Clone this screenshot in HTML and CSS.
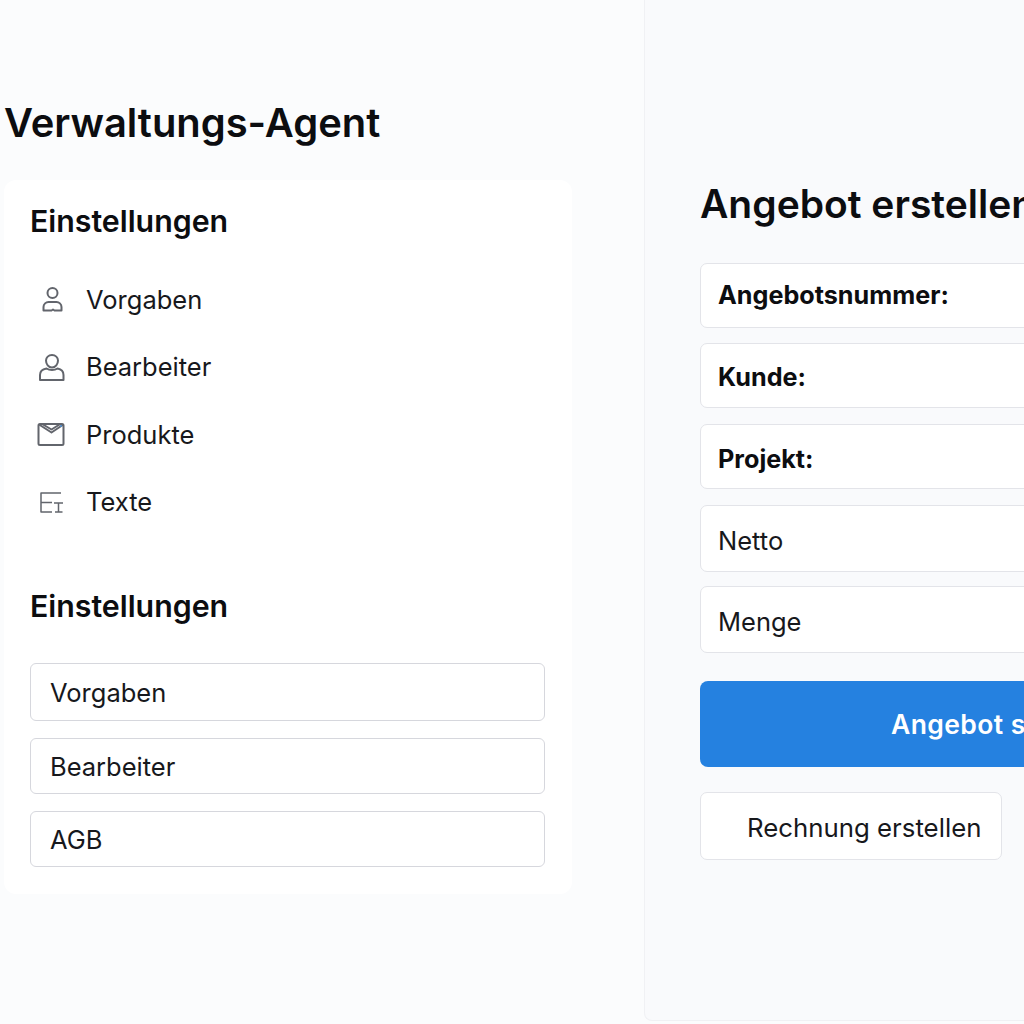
FILE: index.html
```html
<!DOCTYPE html>
<html lang="de">
<head>
<meta charset="utf-8">
<title>Verwaltungs-Agent</title>
<link rel="stylesheet" href="styles.css">
</head>
<body>
<div class="app">
  <main class="left">
    <h1 class="title">Verwaltungs-Agent</h1>
    <section class="card">
      <h2 class="heading">Einstellungen</h2>
      <ul class="menu">
        <li class="menu-item">
          <span class="icon"><svg width="28" height="28" viewBox="0 0 28 28" fill="none"><circle cx="15.500" cy="7" r="5" class="ico"/><path d="M6.500 24.500v-3.500c0-3 2.500-5 5-5h8c2.500 0 5 2 5 5v3.500h-7l-1.500-1-1.500 1z" class="ico"/></svg></span>
          <span>Vorgaben</span>
        </li>
        <li class="menu-item">
          <span class="icon"><svg width="28" height="28" viewBox="0 0 28 28" fill="none"><path d="M15 2c3.500 0 6 2.500 6 5.500 0 3.500-2.500 7-6 7s-6-3.500-6-7C9 4.500 11.500 2 15 2z" class="ico"/><path d="M3 27v-5c0-4 3.500-6 6.500-6.500 1.500 1 3.500 1.500 5.500 1.500s4-.5 5.500-1.500c3 .5 6 2.500 6 6.500v5z" class="ico"/></svg></span>
          <span>Bearbeiter</span>
        </li>
        <li class="menu-item">
          <span class="icon"><svg width="28" height="28" viewBox="0 0 28 28" fill="none"><rect x="1.500" y="4" width="25" height="21" rx="1.500" class="ico"/><path d="M2 4.500l12.500 8 12-8M6 4.500l8.500 5 8-5" class="ico"/><circle cx="24" cy="6" r="1" class="dot"/></svg></span>
          <span>Produkte</span>
        </li>
        <li class="menu-item">
          <span class="icon"><svg width="28" height="28" viewBox="0 0 28 28" fill="none"><path d="M24 5H4v19h11M4 14.500h11M17 15h9M21.500 15v9M18 24h7.500" class="ico thin"/></svg></span>
          <span>Texte</span>
        </li>
      </ul>
      <h2 class="heading second">Einstellungen</h2>
      <div class="stack">
        <div class="field tall">Vorgaben</div>
        <div class="field">Bearbeiter</div>
        <div class="field">AGB</div>
      </div>
    </section>
  </main>
  <aside class="panel">
    <h2 class="panel-title">Angebot erstellen</h2>
    <div class="form">
      <div class="row strong first">Angebotsnummer:</div>
      <div class="row strong low">Kunde:</div>
      <div class="row strong lower">Projekt:</div>
      <div class="row plain">Netto</div>
      <div class="row plain">Menge</div>
    </div>
    <button class="primary"><span>Angebot speichern</span></button>
    <button class="secondary">Rechnung erstellen</button>
  </aside>
</div>
</body>
</html>
```

FILE: styles.css
```css
* { box-sizing: border-box; }
html, body { margin: 0; height: 100%; }
body {
  width: 1024px;
  height: 1024px;
  overflow: hidden;
  background: #fbfcfd;
  font-family: Inter, "Noto Sans", sans-serif;
  color: #111215;
}
.app { display: flex; height: 1024px; }
.left { width: 644px; flex: none; padding: 99px 72px 0 4px; }
.title {
  margin: 0 0 33px 0;
  font-size: 39.900px;
  line-height: 48px;
  font-weight: 600;
  color: #0c0d10;
}
.card {
  height: 714px;
  background: #fff;
  border-radius: 12px;
  padding: 23px 27px 24px 26px;
}
.heading {
  margin: 0;
  font-size: 30.300px;
  line-height: 36px;
  font-weight: 600;
  color: #0c0d10;
}
.heading.second { margin-top: 53px; }
.menu { list-style: none; margin: 27px 0 0; padding: 0; }
.menu-item {
  display: flex;
  align-items: center;
  height: 67.300px;
  font-size: 25.500px;
  color: #17181c;
}
.icon { width: 28px; height: 28px; margin: 0 21px 0 7px; display: flex; }
.ico { stroke: #62656c; stroke-width: 2; stroke-linejoin: round; }
.thin { stroke-width: 1.500; }
.dot { fill: #4a90d9; }
.stack { display: flex; flex-direction: column; gap: 17px; margin-top: 39px; }
.field {
  height: 56px;
  display: flex;
  align-items: center;
  padding: 0 19px;
  border: 1px solid #d6d7dd;
  border-radius: 6px;
  background: #fff;
  font-size: 25.500px;
  color: #17181c;
}
.field.tall { height: 58px; }
.panel {
  width: 500px;
  flex: none;
  height: 1021px;
  padding: 177px 0 0 55px;
  background: #f9fafc;
  border: 1px solid #f0f1f4;
  border-top: none;
  border-right: none;
  border-radius: 0 0 0 8px;
}
.panel-title {
  margin: 0 0 31.700px;
  font-size: 39px;
  line-height: 54px;
  font-weight: 600;
  white-space: nowrap;
  color: #0c0d10;
}
.form { display: flex; flex-direction: column; gap: 15.500px; }
.row {
  height: 65px;
  display: flex;
  align-items: center;
  padding: 0 17px;
  background: #fff;
  border: 1px solid #e3e4e9;
  border-radius: 7px;
  font-size: 25px;
  color: #17181c;
}
.strong { font-weight: 700; color: #0c0d10; font-size: 25.200px; }
.first { padding-bottom: 1px; }
.low { padding-top: 3px; }
.lower { padding-top: 5px; }
.plain { height: 67px; margin-top: 0.600px; padding-top: 4px; font-size: 25.500px; }
.plain + .plain { margin-top: -1.500px; }
.primary {
  display: block;
  width: 100%;
  height: 86px;
  margin-top: 28.300px;
  border: none;
  border-radius: 8px;
  background: #2581e0;
  color: #fff;
  font: 600 26.500px Inter, "Noto Sans", sans-serif;
  letter-spacing: 0.4px;
  padding: 0 0 0 191px;
  text-align: left;
  white-space: nowrap;
  overflow: hidden;
}
.secondary {
  display: block;
  width: 302px;
  height: 68px;
  margin-top: 25px;
  padding: 2px 0 0 46px;
  text-align: left;
  background: #fff;
  border: 1px solid #e3e4e9;
  border-radius: 7px;
  color: #17181c;
  font: 400 25.800px Inter, "Noto Sans", sans-serif;
  white-space: nowrap;
}
```
